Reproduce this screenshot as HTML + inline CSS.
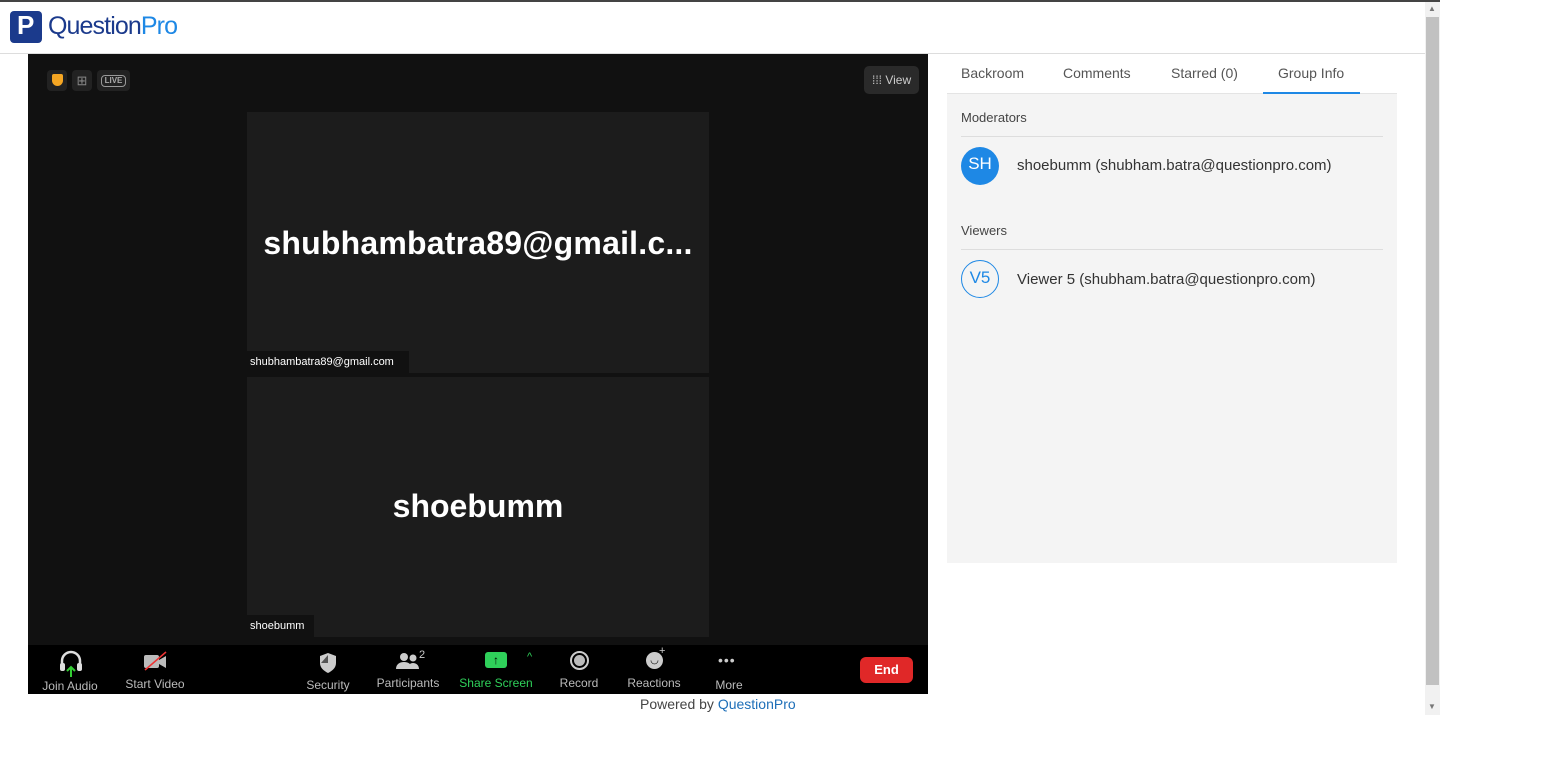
<!DOCTYPE html>
<html><head><style>
*{margin:0;padding:0;box-sizing:border-box}
body{width:1559px;height:759px;background:#fff;font-family:"Liberation Sans",sans-serif;position:relative;overflow:hidden}
.a{position:absolute;white-space:nowrap}
.tb{color:#bbb;font-size:12px;text-align:center}
</style></head><body>
<div class="a" style="left:0;top:0;width:1440px;height:2px;background:#444"></div>
<div class="a" style="left:0;top:53px;width:1425px;height:1px;background:#ddd"></div>
<!-- logo -->
<div class="a" style="left:10px;top:11px;width:32px;height:32px;background:#1b3a8c;border-radius:4px"></div>
<div class="a" style="left:17px;top:10px;color:#fff;font-weight:bold;font-size:26px">P</div>
<div class="a" style="left:48px;top:12px;font-size:25px;color:#1b3a8c;letter-spacing:-0.9px">Question<span style="color:#1e88e5">Pro</span></div>
<!-- video -->
<div class="a" style="left:28px;top:54px;width:900px;height:640px;background:#111"></div>
<div class="a" style="left:47px;top:70px;width:20px;height:21px;background:#222;border-radius:4px"></div>
<div class="a" style="left:52px;top:74px;width:11px;height:12px;background:#f5a623;border-radius:2px 2px 6px 6px"></div>
<div class="a" style="left:72px;top:70px;width:20px;height:21px;background:#222;border-radius:4px;color:#888;font-size:13px;text-align:center;line-height:21px">⊞</div>
<div class="a" style="left:97px;top:70px;width:33px;height:21px;background:#222;border-radius:4px"></div>
<div class="a" style="left:101px;top:75px;width:25px;height:12px;border:1px solid #999;border-radius:4px;color:#aaa;font-size:8px;font-weight:bold;text-align:center;line-height:10px">LIVE</div>
<div class="a" style="left:864px;top:66px;width:55px;height:28px;background:#2a2a2a;border-radius:5px;color:#ccc;font-size:12px;line-height:28px;padding-left:8px">⁞⁞⁞ View</div>
<div class="a" style="left:247px;top:112px;width:462px;height:261px;background:#1c1c1c"></div>
<div class="a" style="left:247px;top:225px;width:462px;text-align:center;color:#fff;font-weight:bold;font-size:32px;letter-spacing:0.2px">shubhambatra89@gmail.c...</div>
<div class="a" style="left:247px;top:351px;width:162px;height:22px;background:#111;color:#fff;font-size:11px;line-height:22px;padding-left:3px">shubhambatra89@gmail.com</div>
<div class="a" style="left:247px;top:377px;width:462px;height:260px;background:#1c1c1c"></div>
<div class="a" style="left:247px;top:488px;width:462px;text-align:center;color:#fff;font-weight:bold;font-size:32px">shoebumm</div>
<div class="a" style="left:247px;top:615px;width:67px;height:22px;background:#111;color:#fff;font-size:11px;line-height:22px;padding-left:3px">shoebumm</div>
<!-- toolbar -->
<div class="a" style="left:28px;top:645px;width:900px;height:49px;background:#000"></div>
<svg class="a" style="left:58px;top:649px" width="26" height="28"><path d="M4 16v-4a9 9 0 0118 0v4" stroke="#ddd" stroke-width="2.5" fill="none"/><rect x="2" y="14" width="5" height="8" rx="2" fill="#ddd"/><rect x="19" y="14" width="5" height="8" rx="2" fill="#ddd"/><path d="M13 28v-9M9 22l4-4 4 4" stroke="#3c3" stroke-width="2" fill="none"/></svg>
<div class="a tb" style="left:40px;top:679px;width:60px">Join Audio</div>
<svg class="a" style="left:142px;top:650px" width="26" height="22"><rect x="2" y="5" width="15" height="13" rx="2" fill="#bbb"/><path d="M17 10l7-4v12l-7-4z" fill="#bbb"/><path d="M3 20L24 2" stroke="#e33" stroke-width="1.5"/></svg>
<div class="a tb" style="left:120px;top:677px;width:70px">Start Video</div>
<svg class="a" style="left:318px;top:652px" width="20" height="22"><path d="M10 1l8 3v7c0 5-4 8-8 10-4-2-8-5-8-10V4z" fill="#ccc"/><path d="M10 3v8H3" fill="#555"/></svg>
<div class="a tb" style="left:300px;top:678px;width:56px">Security</div>
<svg class="a" style="left:396px;top:652px" width="26" height="18"><circle cx="8" cy="5" r="4" fill="#ccc"/><circle cx="17" cy="6" r="3.5" fill="#ccc"/><path d="M0 17c0-5 4-7 8-7s8 2 8 7z M12 17c0-4 2-6 5-6s6 2 6 6z" fill="#ccc"/></svg>
<div class="a" style="left:419px;top:649px;color:#ccc;font-size:11px">2</div>
<div class="a tb" style="left:372px;top:676px;width:72px">Participants</div>
<div class="a" style="left:485px;top:652px;width:22px;height:16px;background:#2fd05a;border-radius:3px;color:#000;font-size:12px;text-align:center;line-height:16px;font-weight:bold">↑</div>
<div class="a" style="left:527px;top:651px;color:#2fd05a;font-size:11px">^</div>
<div class="a" style="left:458px;top:676px;width:76px;color:#2fd05a;font-size:12px;text-align:center">Share Screen</div>
<div class="a" style="left:570px;top:651px;width:19px;height:19px;border:2px solid #ccc;border-radius:50%"><div style="margin:2px;width:11px;height:11px;background:#bbb;border-radius:50%"></div></div>
<div class="a tb" style="left:555px;top:676px;width:48px">Record</div>
<div class="a" style="left:646px;top:652px;width:17px;height:17px;background:#ccc;border-radius:50%;color:#000;font-size:10px;text-align:center;line-height:17px">◡</div>
<div class="a" style="left:659px;top:645px;color:#ccc;font-size:11px">+</div>
<div class="a tb" style="left:622px;top:676px;width:64px">Reactions</div>
<div class="a" style="left:718px;top:652px;color:#ccc;font-size:14px;letter-spacing:1px">•••</div>
<div class="a tb" style="left:705px;top:678px;width:48px">More</div>
<div class="a" style="left:860px;top:657px;width:53px;height:26px;background:#e02828;border-radius:6px;color:#fff;font-weight:bold;font-size:13px;text-align:center;line-height:26px">End</div>
<div class="a" style="left:640px;top:696px;font-size:14px;color:#444">Powered by <span style="color:#1e6fb8">QuestionPro</span></div>
<!-- right panel -->
<div class="a" style="left:947px;top:54px;width:450px;height:509px;background:#f4f4f4"></div>
<div class="a" style="left:947px;top:54px;width:450px;height:40px;background:#fff;border-bottom:1px solid #e4e4e4"></div>
<div class="a" style="left:961px;top:65px;font-size:14px;color:#555">Backroom</div>
<div class="a" style="left:1063px;top:65px;font-size:14px;color:#555">Comments</div>
<div class="a" style="left:1171px;top:65px;font-size:14px;color:#555">Starred (0)</div>
<div class="a" style="left:1278px;top:65px;font-size:14px;color:#555">Group Info</div>
<div class="a" style="left:1263px;top:92px;width:97px;height:2px;background:#1e88e5"></div>
<div class="a" style="left:961px;top:110px;font-size:13px;color:#444">Moderators</div>
<div class="a" style="left:961px;top:136px;width:422px;height:1px;background:#ddd"></div>
<div class="a" style="left:961px;top:147px;width:38px;height:38px;border-radius:50%;background:#1e88e5;color:#fff;font-size:17px;text-align:center;line-height:34px">SH</div>
<div class="a" style="left:1017px;top:157px;font-size:15px;color:#333">shoebumm (shubham.batra@questionpro.com)</div>
<div class="a" style="left:961px;top:223px;font-size:13px;color:#444">Viewers</div>
<div class="a" style="left:961px;top:249px;width:422px;height:1px;background:#ddd"></div>
<div class="a" style="left:961px;top:260px;width:38px;height:38px;border-radius:50%;border:1px solid #1e88e5;color:#1e88e5;font-size:17px;text-align:center;line-height:34px">V5</div>
<div class="a" style="left:1017px;top:271px;font-size:15px;color:#333">Viewer 5 (shubham.batra@questionpro.com)</div>
<!-- scrollbar -->
<div class="a" style="left:1425px;top:2px;width:15px;height:713px;background:#f1f1f1"></div>
<div class="a" style="left:1426px;top:17px;width:13px;height:668px;background:#c1c1c1"></div>
<div class="a" style="left:1428px;top:4px;color:#777;font-size:8px">▲</div>
<div class="a" style="left:1428px;top:702px;color:#777;font-size:8px">▼</div>
</body></html>
